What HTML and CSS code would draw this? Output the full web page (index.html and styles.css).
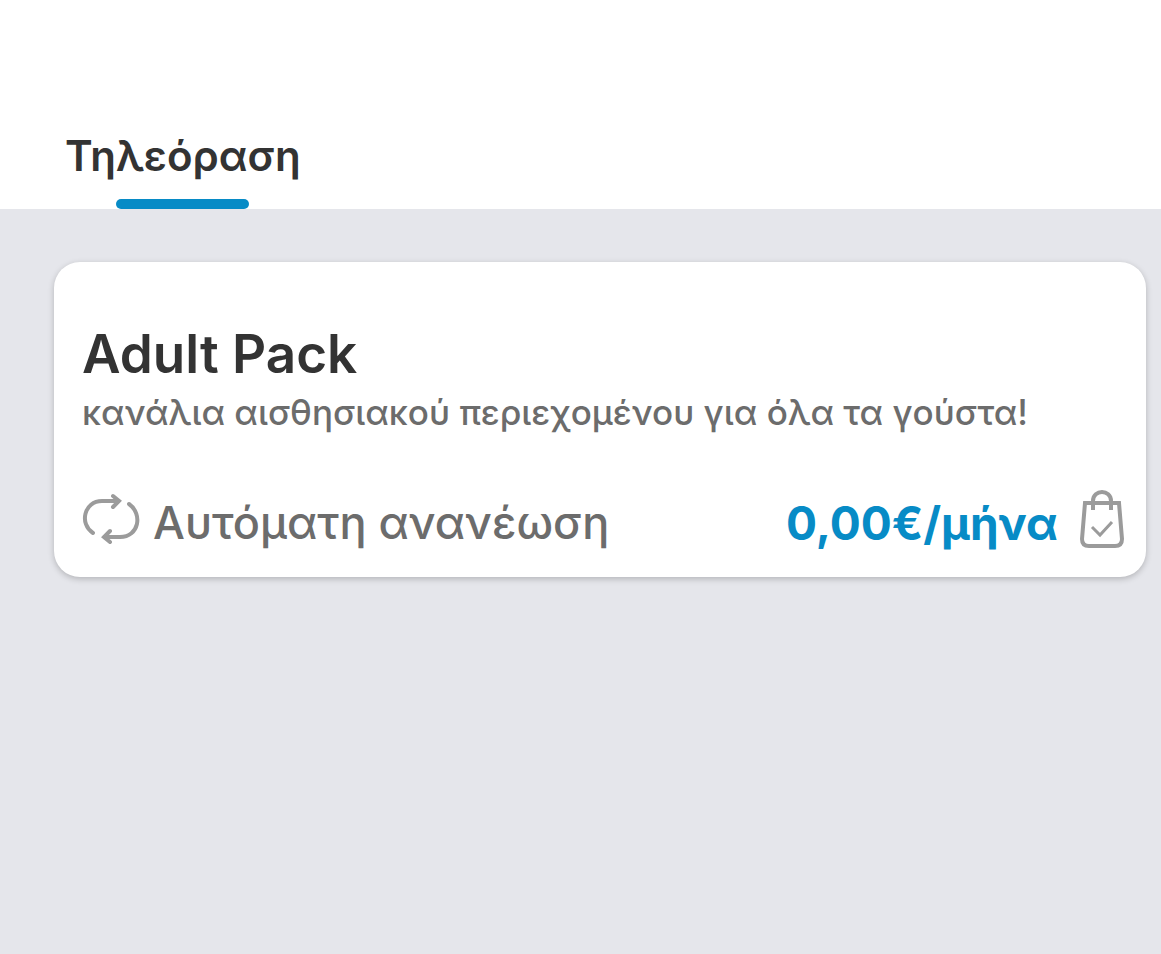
FILE: index.html
```html
<!DOCTYPE html>
<html lang="el">
<head>
    <meta charset="UTF-8">
    <meta name="viewport" content="width=device-width, initial-scale=1.0">
    <title>Τηλεόραση</title>
    <link rel="stylesheet" href="styles.css">
</head>
<body>
    <header class="tabs">
        <button type="button" class="tab active">Τηλεόραση</button>
    </header>

    <main class="content">
        <article class="card">
            <h1 class="card-title">Adult Pack</h1>
            <p class="card-text">κανάλια αισθησιακού περιεχομένου για όλα τα γούστα!</p>

            <div class="card-footer">
                <svg class="icon-renew" viewBox="0 0 58 52" aria-hidden="true">
                    <path d="M11 40C-3 31 2 8 20 8H36M31 3L37 8L31 14"/>
                    <path d="M47 11C61 21 57 44 38 44H22M28 38L22 44L28 49"/>
                </svg>
                <span class="renew">Αυτόματη ανανέωση</span>
                <span class="price">0,00€/μήνα</span>
                <svg class="icon-bag" viewBox="0 0 44 58" aria-hidden="true">
                    <path d="M5 13H39L42 49Q42 56 35 56H9Q2 56 2 49Z"/>
                    <path d="M13 20V11C13 -1 31 -1 31 11V20"/>
                    <path class="check" d="M12 37L20 45L32 32"/>
                </svg>
            </div>
        </article>
    </main>
</body>
</html>
```

FILE: styles.css
```css
:root {
    --primary-color: #078bc6;
    --text-color: #333333;
    --gray-text: #6c6c6c;
    --icon-color: #9b9b9b;
    --background: #e5e6eb;
}

* {
    box-sizing: border-box;
}

body {
    margin: 0;
    min-height: 100vh;
    font-family: Inter, "Noto Sans", sans-serif;
    color: var(--text-color);
    background-color: var(--background);
}

.tabs {
    display: flex;
    padding: 128px 65px 0;
    background-color: white;
}

.tab {
    display: flex;
    flex-direction: column;
    align-items: center;
    gap: 15px;
    padding: 0;
    border: none;
    background: none;
    color: inherit;
    font-family: inherit;
    font-size: 42px;
    font-weight: 600;
    line-height: 56px;
    cursor: pointer;
}

.tab.active::after {
    content: "";
    width: 133px;
    height: 10px;
    border-radius: 5px;
    background-color: var(--primary-color);
}

.content {
    padding: 53px 15px 53px 54px;
}

.card {
    padding: 60px 22px 22px 28px;
    border-radius: 26px;
    background-color: white;
    box-shadow: 0 2px 6px rgba(0, 0, 0, 0.22);
}

.card-title {
    margin: 0;
    font-size: 53px;
    font-weight: 600;
    line-height: 64px;
}

.card-text {
    margin: 2px 0 0;
    color: var(--gray-text);
    font-size: 35px;
    font-weight: 500;
    line-height: 48px;
}

.card-footer {
    display: flex;
    align-items: center;
    margin-top: 54px;
    font-size: 46px;
    line-height: 64px;
    white-space: nowrap;
}

.renew {
    margin-left: 13px;
    color: var(--gray-text);
    font-size: 45px;
    font-weight: 500;
}

.price {
    margin-left: auto;
    color: var(--primary-color);
    font-weight: 700;
}

.icon-renew,
.icon-bag {
    flex: none;
    margin-bottom: 7px;
    fill: none;
    stroke: var(--icon-color);
    stroke-width: 4;
}

.icon-renew {
    width: 58px;
    height: 52px;
    stroke-linecap: round;
}

.icon-bag {
    width: 44px;
    height: 58px;
    margin-left: 22px;
}

.icon-bag .check {
    stroke-width: 3;
}
```
